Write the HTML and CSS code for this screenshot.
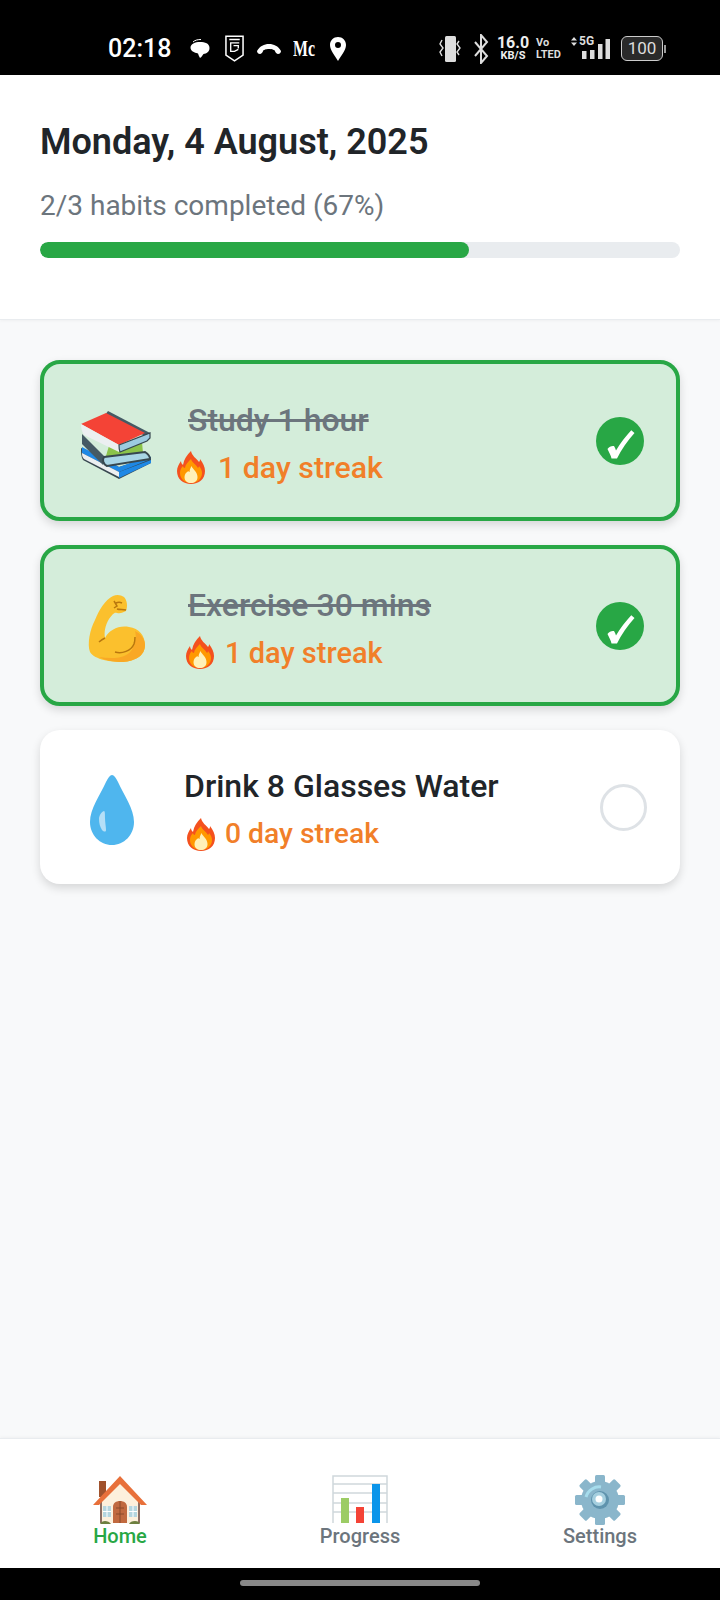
FILE: index.html
```html
<!DOCTYPE html>
<html lang="en">
<head>
<meta charset="utf-8">
<title>Habits</title>
<link rel="stylesheet" href="styles.css">
</head>
<body>
<svg class="defs" aria-hidden="true">
  <symbol id="fire" viewBox="0 0 28 33">
    <path fill="#f4511e" d="M14 0c1 5 5 7 8 11 1-1 1-2 1-3 3 4 5 8 5 12 0 8-6 13-14 13S0 28 0 20c0-4 2-7 4-10 0 2 1 3 2 4 1-6 4-10 8-14z"/>
    <path fill="#ff9800" d="M14 8c1 4 5 5 7 9 0 0 1-1 1-2 2 2 3 5 3 7 0 6-5 10-11 10S3 28 3 22c0-3 1-5 3-7 0 1 1 2 2 2 0-3 3-6 6-9z"/>
    <path fill="#fff1b8" d="M14.500 15c1 3 6 6 6 11 0 4-3 6-6.500 6s-6.500-2-6.500-6c0-3 2-5 4-6 0 1 1 1 1 1 0-2 1-4 2-6z"/>
  </symbol>
  <symbol id="check" viewBox="0 0 48 48">
    <circle cx="24" cy="24" r="24" fill="#28a745"/>
    <path fill="#fff" d="M35.500 13.500l3 2.500C31.500 24 25.500 32 21 41.500h-5.500c-.5-3-2.500-6-4-9.500 1.500-2.500 4.500-3.500 6.500-3 1 1.500 1.500 3 2 4.500 4-7 9.500-14 15.500-20.500z"/>
  </symbol>
</svg>

<div class="app">
  <div class="status">
    <div class="status-left">
      <span class="clock">02:18</span>
      <svg class="st-bubble" viewBox="0 0 20 19"><path fill="#fff" d="M10 3c5 0 9.500 1.500 9.500 6 0 4-3 5.500-6 6-1 1.500-2 3-3.500 4-1-1.500-1.500-3-2-4.500C4 13.500.500 12 .500 8.500.500 5 5 3 10 3z"/><path fill="none" stroke="#fff" d="M3 3C5 1 8 .500 11 .500"/></svg>
      <svg class="st-shield" viewBox="0 0 20 28"><path fill="none" stroke="#fff" stroke-width="1.600" d="M1 1h18v20l-9 6-9-6z"/><path fill="none" stroke="#fff" stroke-width="1.400" d="M4.500 4.500h11M15 8H6v9h4l4-2M9 11h5v3"/></svg>
      <svg class="st-call" viewBox="0 0 24 12"><path fill="#fff" d="M0 8C3 3 7 1 12 1s9 2 12 7c0 1-1 3-3 3-1 0-3-2-3-3 0-1-3-2-6-2S6 7 6 8c0 1-2 3-3 3-2 0-3-2-3-3z"/></svg>
      <span class="st-mail">Mc</span>
      <svg class="st-pin" viewBox="0 0 16 24"><path fill="#fff" fill-rule="evenodd" d="M8 0c4.500 0 8 3.500 8 8 0 5-5 11-8 16C5 19 0 13 0 8c0-4.500 3.500-8 8-8zm0 5a3 3 0 100 6 3 3 0 000-6z"/></svg>
    </div>
    <div class="status-right">
      <svg class="st-vib" viewBox="0 0 22 26"><rect x="6" y="0" width="11" height="26" rx="1.500" fill="#ddd"/><path fill="none" stroke="#ddd" stroke-width="1.400" d="M3 4 1 8l3 4-3 4 2 4M20 5l-2 3 3 4-3 4 2 3"/></svg>
      <svg class="st-bt" viewBox="0 0 16 30"><path fill="none" stroke="#ddd" stroke-width="2" d="M2 8l12 14-6 7V1l6 7L2 22"/></svg>
      <div class="st-speed"><span class="sp-top">16.0</span><span class="sp-bot">KB/S</span></div>
      <div class="st-volte"><span>Vo</span><span>LTED</span></div>
      <div class="st-net">
        <svg class="net-arrows" viewBox="0 0 6 9"><path fill="#ddd" d="M3 0l3 3.500H0zM3 9L0 5.500h6z"/></svg>
        <span class="net-5g">5G</span>
        <svg class="net-bars" viewBox="0 0 28 20"><rect x="0" y="12" width="4.500" height="8" fill="#ddd"/><rect x="8" y="11" width="4.500" height="9" fill="#ddd"/><rect x="16" y="5" width="4.500" height="15" fill="#ddd"/><rect x="23.500" y="0" width="4.500" height="20" fill="#ddd"/></svg>
      </div>
      <div class="st-batt"><span class="batt-body">100</span><span class="batt-tip"></span></div>
    </div>
  </div>

  <header class="head">
    <h1 class="date">Monday, 4 August, 2025</h1>
    <p class="summary">2/3 habits completed (67%)</p>
    <div class="track"><div class="fill" style="width:67%"></div></div>
  </header>

  <main class="list">
    <article class="card card-done">
      <svg class="ic ic-books" viewBox="0 0 70 68">
        <path fill="#37474f" d="M0 37l25 12 13 7 32-10v6L38 68 2 49c-2-3-2-8-2-12z"/>
        <path fill="#1e88e5" d="M1 36l37 20 31-11 1 3-32 13L1 42z"/>
        <path fill="#eceff1" d="M1 42l37 19v5L3 48c-2-2-2-4-2-6z"/>
        <path fill="#1e88e5" d="M38 61l32-12v3L38 67z"/>
        <path fill="#455a64" d="M1 23l22 22-1 9L1 33z"/>
        <path fill="#8bc34a" d="M28 35l33-4 1 11-38 6z"/>
        <path fill="#a8d5e5" stroke="#37474f" stroke-width="2" d="M23 46l41-5c3 2 5 5 5 7L26 55c-4-2-5-6-3-9z"/>
        <path fill="#455a64" d="M27 0l42 22v5l-9-4L24 4z"/>
        <path fill="#f44336" d="M0 13 25 2l39 20-26 12z"/>
        <path fill="#eceff1" d="M0 13l38 21v7L3 24C1 21 0 17 0 13z"/>
        <path fill="#9ccbe0" stroke="#37474f" stroke-width="1.200" d="M38 34l31-12v5l-3 3-27 11c-1-2-1-5-1-7z"/>
      </svg>
      <div class="body body-a">
        <div class="name name-done">Study 1 hour</div>
        <div class="streak streak-a"><svg class="fire"><use href="#fire"/></svg><span>1 day streak</span></div>
      </div>
      <svg class="tick"><use href="#check"/></svg>
    </article>

    <article class="card card-done">
      <svg class="ic ic-arm" viewBox="0 0 58 68">
        <path fill="#fbc02d" d="M3 58C0 50 3 35 8 26 12 16 18 6 26 2c4-2 8-1 11 1 3 3 4 9 2 14-3 1-5 3-9 2-3-1-4 1-8 6-4 7-5 13-4 19 4-8 14-13 24-11 10 1 16 9 16 18 0 11-10 16-22 17C24 68 8 66 3 58z"/>
        <path fill="#f9a825" d="M48 37c6 3 10 8 10 14 0 11-10 16-22 17-8 0-17-1-24-5 12 2 26 2 32-6 4-6 6-13 4-20z"/>
        <path fill="none" stroke="#b9770e" stroke-width="1.500" d="M28 58c7 2 16-1 19-8 1-3 1-5 1-7M12 48c2-2 4-3 6-4M29 9c2-1 4-1 6 0M30 15c3 1 6 0 9 1M27 7l3 5-3 2"/>
      </svg>
      <div class="body body-b">
        <div class="name name-done">Exercise 30 mins</div>
        <div class="streak streak-b"><svg class="fire"><use href="#fire"/></svg><span>1 day streak</span></div>
      </div>
      <svg class="tick"><use href="#check"/></svg>
    </article>

    <article class="card card-open">
      <svg class="ic ic-drop" viewBox="0 0 44 70">
        <path fill="#4fb6ee" d="M22 0c2 0 4 3 6 7 6 13 16 27 16 40 0 13-10 23-22 23S0 60 0 47C0 34 10 20 16 7c2-4 4-7 6-7z"/>
        <path fill="#b5dff7" d="M9 44c0-3 2-7 5-8 1 0 1 3 1 7s1 9 1 12c0 2-2 2-4 0-2-3-3-7-3-11z"/>
      </svg>
      <div class="body body-c">
        <div class="name">Drink 8 Glasses Water</div>
        <div class="streak streak-c"><svg class="fire"><use href="#fire"/></svg><span>0 day streak</span></div>
      </div>
      <span class="ring"></span>
    </article>
  </main>

  <nav class="nav">
    <div class="tab tab-on">
      <svg class="tab-ic" viewBox="0 0 56 50">
        <rect x="7" y="6" width="7" height="16" fill="#a0522d"/>
        <path fill="#fdf0dc" d="M9 23 28 6l19 17v25H9z"/>
        <path fill="#8d6e63" d="M8 24h2v24H8zM46 24h2v24h-2z"/>
        <path fill="#e8703a" d="M1 30 28 1l27 29h-6L28 9 7 30z"/>
        <path fill="#c1693f" d="M21 48V32c0-4 3-6 7-6s7 2 7 6v16z"/>
        <path fill="none" stroke="#8a4a2a" d="M28 26v22M24 33h8M24 39h8"/>
        <path fill="#b5d6df" d="M11 31h8v11h-8zM37 31h8v11h-8z"/>
        <path stroke="#fff" d="M15 31v11M11 36.500h8M41 31v11M37 36.500h8"/>
        <path fill="#6d7f3f" d="M8 49c1-2 3-3 5-3s5 1 6 3zM37 49c1-2 3-3 6-3s4 1 5 3z"/>
      </svg>
      <span class="tab-txt">Home</span>
    </div>
    <div class="tab">
      <svg class="tab-ic" viewBox="0 0 56 50">
        <path fill="none" stroke="#cfd8dc" stroke-width="1.500" d="M1 48V1h54v47M1 9h54M1 18h54M1 28h54M1 37h54"/>
        <rect x="9" y="23" width="8" height="25" fill="#9ccc65"/>
        <rect x="24" y="32" width="8" height="16" fill="#f44336"/>
        <rect x="40" y="9" width="8" height="39" fill="#0b95ea"/>
      </svg>
      <span class="tab-txt">Progress</span>
    </div>
    <div class="tab">
      <svg class="tab-ic" viewBox="0 0 56 50">
        <g fill="#8ab6cb">
          <rect x="23" y="0" width="10" height="50" rx="1.500"/>
          <rect x="23" y="0" width="10" height="50" rx="1.500" transform="rotate(45 28 25)"/>
          <rect x="23" y="0" width="10" height="50" rx="1.500" transform="rotate(90 28 25)"/>
          <rect x="23" y="0" width="10" height="50" rx="1.500" transform="rotate(135 28 25)"/>
          <circle cx="28" cy="25" r="19"/>
        </g>
        <path fill="none" stroke="#a6dcec" stroke-width="3" d="M14 22c2-7 9-11 15-10"/>
        <circle cx="28" cy="25" r="9" fill="#5f93ad"/>
        <circle cx="27" cy="24" r="7" fill="#a5cfdf"/>
        <circle cx="27" cy="24" r="3.500" fill="#fff"/>
      </svg>
      <span class="tab-txt tab-set">Settings</span>
    </div>
  </nav>

  <div class="gesture"><span class="pill"></span></div>
</div>
</body>
</html>
```

FILE: styles.css
```css
* { box-sizing: border-box; }
html, body { margin: 0; padding: 0; }
body { font-family: Roboto, "Liberation Sans", sans-serif; background: #f8f9fa; }
.defs { display: none; }

.app { width: 720px; height: 1600px; display: flex; flex-direction: column; overflow: hidden; }

/* status bar */
.status { height: 75px; flex: none; background: #000; color: #fff; display: flex; justify-content: space-between; align-items: center; padding: 22px 54px 0 108px; }
.status-left, .status-right { display: flex; align-items: center; }
.clock { font-size: 25px; font-weight: 500; width: 82px; }
.st-bubble { width: 20px; height: 19px; margin-right: 15px; }
.st-shield { width: 19px; height: 27px; margin-right: 13px; }
.st-call { width: 24px; height: 12px; margin-right: 12px; }
.st-mail { font-family: "Liberation Serif", serif; font-weight: 700; font-size: 24px; width: 22px; margin-right: 15px; white-space: nowrap; transform: scaleX(.66); transform-origin: left center; }
.st-pin { width: 16px; height: 24px; }
.st-vib { width: 22px; height: 26px; margin-right: 12px; }
.st-bt { width: 16px; height: 30px; margin-right: 8px; }
.st-speed { display: flex; flex-direction: column; align-items: center; width: 32px; margin-right: 7px; color: #eee; line-height: 1; font-weight: 700; }
.sp-top { font-size: 16px; line-height: 15px; }
.sp-bot { font-size: 11px; line-height: 12px; }
.st-volte { display: flex; flex-direction: column; width: 26px; margin-right: 9px; font-size: 11px; font-weight: 700; line-height: 12px; color: #ddd; white-space: nowrap; }
.st-net { position: relative; width: 39px; height: 28px; margin-right: 11px; }
.net-arrows { position: absolute; left: 0; top: 2px; width: 6px; height: 9px; }
.net-5g { position: absolute; left: 8px; top: 0; font-size: 12px; line-height: 13px; font-weight: 700; color: #ddd; }
.net-bars { position: absolute; right: 0; bottom: 4px; width: 28px; height: 20px; }
.st-batt { display: flex; align-items: center; }
.batt-body { width: 42px; height: 25px; border: 1.500px solid #ccc; border-radius: 6px; background: #2a2a2a; color: #ddd; font-size: 17px; line-height: 22px; text-align: center; }
.batt-tip { width: 2px; height: 8px; background: #999; margin-left: 1px; }

/* header */
.head { flex: none; height: 245px; background: #fff; border-bottom: 1px solid #e9ecef; padding: 47px 40px 0; box-shadow: 0 1px 3px rgba(0,0,0,.04); }
.date { margin: 0; font-size: 36px; line-height: 40px; font-weight: 600; color: #212529; }
.summary { margin: 28px 0 0; font-size: 28px; line-height: 32px; color: #6c757d; }
.track { margin-top: 20px; height: 16px; background: #e9ecef; border-radius: 8px; overflow: hidden; }
.fill { height: 100%; background: #28a745; border-radius: 8px; }

/* list */
.list { flex: 1; display: flex; flex-direction: column; gap: 24px; padding: 40px 40px 0; }
.card { display: flex; align-items: center; border-radius: 20px; box-shadow: 0 4px 10px rgba(0,0,0,.14); }
.card-done { height: 161px; background: #d4edda; border: 4px solid #28a745; }
.card-open { height: 154px; background: #fff; }
.ic { flex: none; }
.ic-books { width: 70px; height: 68px; margin: 8px 0 0 37px; }
.ic-arm { width: 58px; height: 68px; margin: 4px 0 0 43px; }
.ic-drop { width: 44px; height: 70px; margin: 6px 0 0 50px; }
.body { flex: 1; display: flex; flex-direction: column; padding-top: 6px; }
.body-a { margin-left: 25px; }
.body-b { margin-left: 40px; }
.body-c { margin-left: 52px; }
.name { font-size: 32px; line-height: 38px; font-weight: 500; color: #212529; }
.name-done { color: #6c757d; text-decoration: line-through; }
.body-a .name { margin-left: 12px; }
.body-b .name { margin-left: 3px; }
.body-c .name { margin-left: -2px; }
.streak { display: flex; align-items: center; margin-top: 10px; color: #f17f29; line-height: 38px; font-weight: 500; }
.fire { width: 30px; height: 33px; flex: none; }
.streak-a { font-size: 30.300px; }
.streak-b { font-size: 29px; }
.streak-c { font-size: 28.300px; }
.streak-a .fire { margin-right: 12px; }
.streak-b .fire { margin-right: 10px; }
.streak-c .fire { margin-right: 9px; }
.tick { width: 48px; height: 48px; flex: none; margin-right: 32px; }
.ring { width: 47px; height: 47px; flex: none; border: 3px solid #dee2e6; border-radius: 50%; margin-right: 33px; background: #fff; }

/* nav */
.nav { flex: none; height: 130px; background: #fff; border-top: 1px solid #e9ecef; display: grid; grid-template-columns: repeat(3, 1fr); padding-top: 36px; box-shadow: 0 -1px 3px rgba(0,0,0,.04); }
.tab { display: flex; flex-direction: column; align-items: center; color: #6c757d; }
.tab-on { color: #28a745; }
.tab-ic { width: 56px; height: 50px; flex: none; }
.tab-txt { font-size: 20px; line-height: 24px; font-weight: 500; margin-top: -1px; }

.gesture { flex: none; height: 32px; background: #000; display: flex; justify-content: center; padding-top: 12px; }
.pill { width: 240px; height: 6px; border-radius: 3px; background: #888; }
```
